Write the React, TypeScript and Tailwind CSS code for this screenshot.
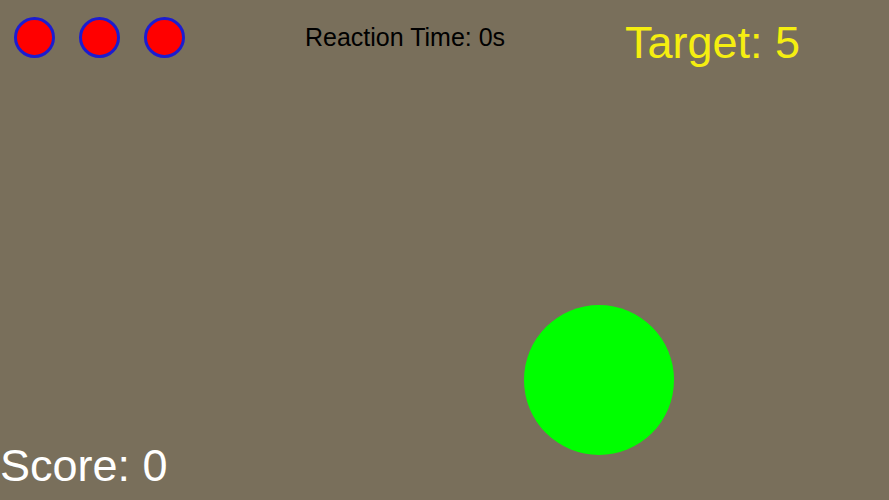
import React from "react";

export default function App() {
  const lives = [14, 79, 144];
  return (
    <div
      className="relative w-[889px] h-[500px] overflow-hidden bg-[#796f5b]"
      style={{ fontFamily: '"Liberation Sans", Arial, sans-serif' }}
    >
      {lives.map((x) => (
        <div
          key={x}
          className="absolute top-[17px] w-[41px] h-[41px] rounded-full bg-[#ff0000] border-[3px] border-[#1c1cd0]"
          style={{ left: x }}
        />
      ))}
      <div className="absolute left-[305px] top-[22px] text-[25px] leading-[30px] text-black whitespace-nowrap">
        Reaction Time: 0s
      </div>
      <div className="absolute left-[625px] top-[17px] text-[45px] leading-[52px] text-[#f5ee10] whitespace-nowrap">
        Target: 5
      </div>
      <div className="absolute left-[524px] top-[305px] w-[150px] h-[150px] rounded-full bg-[#00ff00]" />
      <div className="absolute left-[0px] top-[440px] text-[45px] leading-[52px] text-white whitespace-nowrap">
        Score: 0
      </div>
    </div>
  );
}
